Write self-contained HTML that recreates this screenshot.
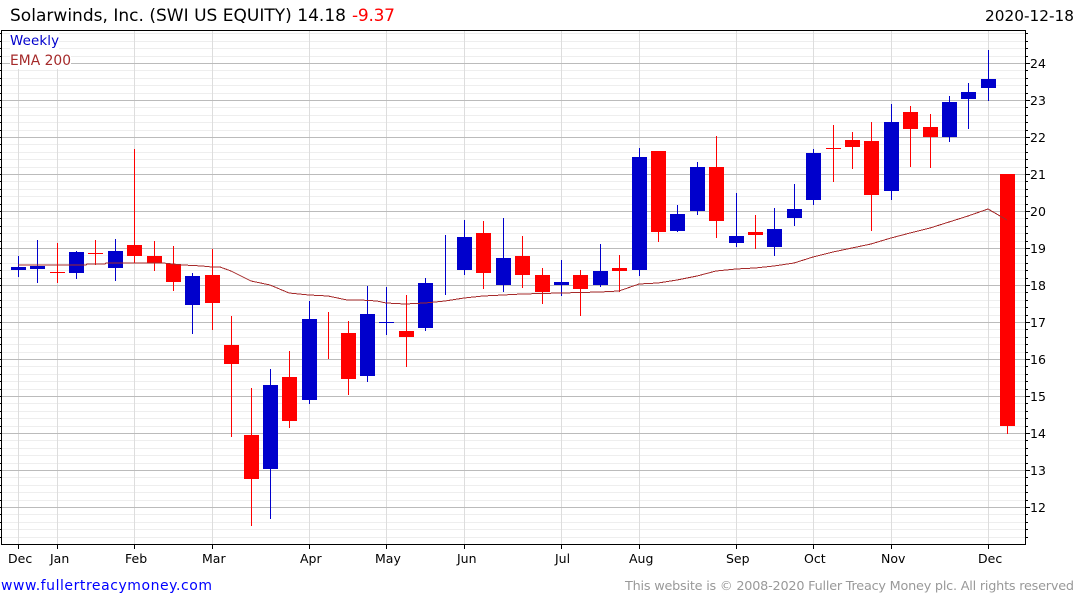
<!DOCTYPE html>
<html><head><meta charset="utf-8"><title>Solarwinds, Inc.</title>
<style>
html,body{margin:0;padding:0;background:#fff;width:1075px;height:600px;overflow:hidden}
svg{display:block;position:absolute;left:0;top:0}
text{font-family:"DejaVu Sans",sans-serif;fill:#000}
.c{shape-rendering:crispEdges;fill:none;stroke-width:1}
.b{shape-rendering:crispEdges;stroke:none}
.ax{font-size:12.5px}
.lb{font-size:12.5px}
</style></head><body>
<svg width="1075" height="600" viewBox="0 0 1075 600" xmlns="http://www.w3.org/2000/svg">
<g class="c" transform="translate(0 .5)" stroke="#eeeeee"><path d="M2 33H1025M2 41H1025M2 48H1025M2 56H1025M2 70H1025M2 78H1025M2 85H1025M2 93H1025M2 107H1025M2 115H1025M2 122H1025M2 130H1025M2 144H1025M2 152H1025M2 159H1025M2 167H1025M2 181H1025M2 189H1025M2 196H1025M2 204H1025M2 218H1025M2 226H1025M2 233H1025M2 241H1025M2 255H1025M2 263H1025M2 270H1025M2 278H1025M2 292H1025M2 300H1025M2 307H1025M2 315H1025M2 329H1025M2 337H1025M2 344H1025M2 352H1025M2 366H1025M2 374H1025M2 381H1025M2 389H1025M2 403H1025M2 411H1025M2 418H1025M2 426H1025M2 440H1025M2 448H1025M2 455H1025M2 463H1025M2 477H1025M2 485H1025M2 492H1025M2 500H1025M2 514H1025M2 522H1025M2 529H1025M2 537H1025"/></g>
<g class="c" transform="translate(.5 0)" stroke="#dddddd"><path d="M18 31V544M57 31V544M134 31V544M212 31V544M309 31V544M386 31V544M464 31V544M561 31V544M639 31V544M736 31V544M813 31V544M891 31V544M988 31V544"/></g>
<g class="c" transform="translate(0 .5)" stroke="#bbbbbb"><path d="M2 63H1025M2 100H1025M2 137H1025M2 174H1025M2 211H1025M2 248H1025M2 285H1025M2 322H1025M2 359H1025M2 396H1025M2 433H1025M2 470H1025M2 507H1025"/></g>
<rect x="10" y="31" width="49" height="20" fill="#fff"/>
<rect x="10" y="51" width="61" height="18" fill="#fff"/>
<g class="c" transform="translate(.5 0)" stroke="#ff0000"><path d="M57 243V283M95 240V265M134 149V263M154 241V271M173 246V291M212 249V330M231 316V437M251 388V526M289 351V428M328 312V359M348 321V395M406 295V367M483 221V289M522 236V288M542 268V304M580 270V316M619 255V292M658 151V242M716 136V238M755 215V249M833 125V182M852 132V169M871 122V231M910 106V167M930 114V168M1007 174V434"/></g>
<g class="c" transform="translate(.5 0)" stroke="#0000cc"><path d="M18 256V277M37 240V283M76 251V279M115 239V281M192 273V334M270 369V519M309 301V404M367 286V382M386 287V335M425 278V331M445 235V295M464 220V275M503 218V292M561 260V296M600 244V287M639 148V276M677 205V232M697 162V215M736 193V247M774 208V256M794 184V226M813 149V205M891 104V200M949 96V142M968 83V129M988 50V101"/></g>
<path class="b" fill="#ff0000" d="M50 272h15v1h-15zM88 253h15v1h-15zM127 245h15v11h-15zM147 256h15v7h-15zM166 264h15v18h-15zM205 275h15v28h-15zM224 345h15v19h-15zM244 435h15v44h-15zM282 377h15v44h-15zM341 333h15v46h-15zM399 331h15v6h-15zM476 233h15v40h-15zM515 256h15v19h-15zM535 275h15v17h-15zM573 275h15v14h-15zM612 268h15v3h-15zM651 151h15v81h-15zM709 167h15v54h-15zM748 232h15v3h-15zM826 148h15v1h-15zM845 140h15v7h-15zM864 141h15v54h-15zM903 112h15v17h-15zM923 127h15v10h-15zM1000 174h15v252h-15z"/>
<path class="b" fill="#0000cc" d="M11 267h15v3h-15zM30 266h15v3h-15zM69 252h15v21h-15zM108 251h15v17h-15zM185 276h15v29h-15zM263 385h15v84h-15zM302 319h15v81h-15zM360 314h15v62h-15zM379 322h15v1h-15zM418 283h15v45h-15zM457 237h15v33h-15zM496 258h15v27h-15zM554 282h15v3h-15zM593 271h15v14h-15zM632 157h15v113h-15zM670 214h15v17h-15zM690 167h15v44h-15zM729 236h15v7h-15zM767 229h15v18h-15zM787 209h15v9h-15zM806 153h15v47h-15zM884 122h15v69h-15zM942 102h15v35h-15zM961 92h15v7h-15zM981 79h15v9h-15z"/>
<polyline class="c" stroke="#a52a2a" points="18,265 86,265 87,264 105,264 106,263 163,263 183,265 202,266 212,267 220,267 231,271 251,281 270,285 289,293 309,295 328,296 347,300 360,300 377,301 386,303 405,304 425,303 445,301 464,298 483,296 503,295 522,294 561,293 600,292 619,291 639,284 658,283 677,280 697,276 716,271 736,269 755,268 774,266 794,263 813,257 833,252 852,248 871,244 891,238 910,233 930,228 949,222 968,216 988,209 1007,220"/>
<g class="c" stroke="#000"><path d="M1 30.5H1026M1.5 30V545M1 544.5H1026M1025.5 30V545"/>
<path transform="translate(0 .5)" d="M0 33H1M0 41H1M0 48H1M0 56H1M0 63H1M0 70H1M0 78H1M0 85H1M0 93H1M0 100H1M0 107H1M0 115H1M0 122H1M0 130H1M0 137H1M0 144H1M0 152H1M0 159H1M0 167H1M0 174H1M0 181H1M0 189H1M0 196H1M0 204H1M0 211H1M0 218H1M0 226H1M0 233H1M0 241H1M0 248H1M0 255H1M0 263H1M0 270H1M0 278H1M0 285H1M0 292H1M0 300H1M0 307H1M0 315H1M0 322H1M0 329H1M0 337H1M0 344H1M0 352H1M0 359H1M0 366H1M0 374H1M0 381H1M0 389H1M0 396H1M0 403H1M0 411H1M0 418H1M0 426H1M0 433H1M0 440H1M0 448H1M0 455H1M0 463H1M0 470H1M0 477H1M0 485H1M0 492H1M0 500H1M0 507H1M0 514H1M0 522H1M0 529H1M0 537H1"/>
<path transform="translate(0 .5)" d="M1026 33H1028M1026 41H1028M1026 48H1028M1026 56H1028M1026 63H1030M1026 70H1028M1026 78H1028M1026 85H1028M1026 93H1028M1026 100H1030M1026 107H1028M1026 115H1028M1026 122H1028M1026 130H1028M1026 137H1030M1026 144H1028M1026 152H1028M1026 159H1028M1026 167H1028M1026 174H1030M1026 181H1028M1026 189H1028M1026 196H1028M1026 204H1028M1026 211H1030M1026 218H1028M1026 226H1028M1026 233H1028M1026 241H1028M1026 248H1030M1026 255H1028M1026 263H1028M1026 270H1028M1026 278H1028M1026 285H1030M1026 292H1028M1026 300H1028M1026 307H1028M1026 315H1028M1026 322H1030M1026 329H1028M1026 337H1028M1026 344H1028M1026 352H1028M1026 359H1030M1026 366H1028M1026 374H1028M1026 381H1028M1026 389H1028M1026 396H1030M1026 403H1028M1026 411H1028M1026 418H1028M1026 426H1028M1026 433H1030M1026 440H1028M1026 448H1028M1026 455H1028M1026 463H1028M1026 470H1030M1026 477H1028M1026 485H1028M1026 492H1028M1026 500H1028M1026 507H1030M1026 514H1028M1026 522H1028M1026 529H1028M1026 537H1028"/>
<path transform="translate(.5 0)" d="M18 545V549M57 545V549M134 545V549M212 545V549M309 545V549M386 545V549M464 545V549M561 545V549M639 545V549M736 545V549M813 545V549M891 545V549M988 545V549"/></g>
<text x="10" y="21" font-size="17" textLength="336" lengthAdjust="spacing">Solarwinds, Inc. (SWI US EQUITY) 14.18</text>
<text x="352" y="21" font-size="17" style="fill:#ff0000" textLength="43" lengthAdjust="spacing">-9.37</text>
<text x="985" y="21" font-size="15.3" textLength="89" lengthAdjust="spacing">2020-12-18</text>
<text x="10" y="45" font-size="13.4" style="fill:#0000cc" textLength="49" lengthAdjust="spacing">Weekly</text>
<text x="10" y="65" font-size="13.8" style="fill:#a52a2a" textLength="61" lengthAdjust="spacing">EMA 200</text>
<g class="ax"><text x="1030" y="68">24</text><text x="1030" y="105">23</text><text x="1030" y="142">22</text><text x="1030" y="179">21</text><text x="1030" y="216">20</text><text x="1030" y="253">19</text><text x="1030" y="290">18</text><text x="1030" y="327">17</text><text x="1030" y="364">16</text><text x="1030" y="401">15</text><text x="1030" y="438">14</text><text x="1030" y="475">13</text><text x="1030" y="512">12</text></g>
<g class="lb"><text x="8" y="563">Dec</text><text x="50" y="563">Jan</text><text x="125" y="563">Feb</text><text x="202" y="563">Mar</text><text x="300" y="563">Apr</text><text x="375" y="563">May</text><text x="457" y="563">Jun</text><text x="555" y="563">Jul</text><text x="629" y="563">Aug</text><text x="726" y="563">Sep</text><text x="804" y="563">Oct</text><text x="881" y="563">Nov</text><text x="978" y="563">Dec</text></g>
<text x="1" y="590" font-size="14" style="fill:#0000ff" textLength="211" lengthAdjust="spacing">www.fullertreacymoney.com</text>
<text x="625" y="590" font-size="12.8" style="fill:#999999" textLength="449" lengthAdjust="spacing">This website is © 2008-2020 Fuller Treacy Money plc. All rights reserved</text>
</svg>
</body></html>
